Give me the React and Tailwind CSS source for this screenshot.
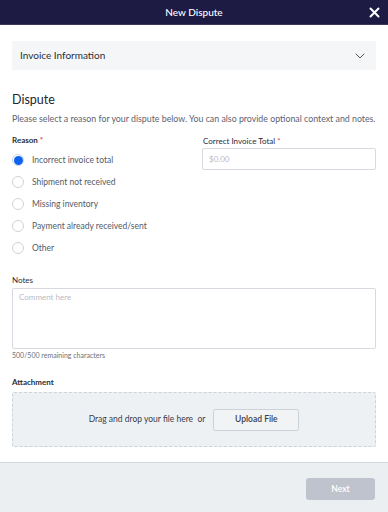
import React from "react";

const font = { fontFamily: "Lato, 'Noto Sans', sans-serif" };

function Radio({ checked, label }) {
  return (
    <div className="flex items-center h-[22px]">
      {checked ? (
        <span className="w-[12px] h-[12px] rounded-full border border-[#c9d4ea] flex items-center justify-center bg-white">
          <span className="w-[9px] h-[9px] rounded-full bg-[#0f62f0]" />
        </span>
      ) : (
        <span className="w-[12px] h-[12px] rounded-full border border-[#cfd3da] bg-white" />
      )}
      <span className="ml-[8px] text-[8.5px] text-[#555a66]">{label}</span>
    </div>
  );
}

export default function App() {
  return (
    <div className="w-[388px] h-[512px] flex flex-col bg-white" style={font}>
      <div className="h-[25px] bg-[#1d1a44] border-b border-[#3a3760] relative flex items-center justify-center shrink-0">
        <span className="text-white text-[10px] font-medium">New Dispute</span>
        <svg className="absolute right-[8px] top-[7px]" width="11" height="11" viewBox="0 0 11 11">
          <path d="M1.5 1.5L9.5 9.5M9.5 1.5L1.5 9.5" stroke="white" strokeWidth="2" strokeLinecap="round" />
        </svg>
      </div>
      <div className="flex-1 px-[12px]">
        <div className="mt-[16px] h-[29px] bg-[#f5f6f7] flex items-center justify-between pl-[8px] pr-[11px]">
          <span className="text-[10px] text-[#2a2d36]">Invoice Information</span>
          <svg width="10" height="6" viewBox="0 0 10 6">
            <path d="M0.7 0.7L5 5L9.3 0.7" stroke="#555" strokeWidth="1" fill="none" />
          </svg>
        </div>
        <div className="mt-[22px] text-[12.5px] text-[#23262f] leading-[16px]">Dispute</div>
        <div className="mt-[6px] text-[8.8px] text-[#5d6270] leading-[10px] whitespace-nowrap">
          Please select a reason for your dispute below. You can also provide optional context and notes.
        </div>
        <div className="grid grid-cols-[1fr_174px] gap-[11px] mt-[11px]">
          <div>
            <div className="text-[8px] font-bold text-[#2a2d36] leading-[10px]">
              Reason <span className="text-[#e0445a]">*</span>
            </div>
            <div className="mt-[4px]">
              <Radio checked label="Incorrect invoice total" />
              <Radio label="Shipment not received" />
              <Radio label="Missing inventory" />
              <Radio label="Payment already received/sent" />
              <Radio label="Other" />
            </div>
          </div>
          <div>
            <div className="text-[8px] text-[#2a2d36] leading-[10px] mt-[1px] ml-[1px]">
              Correct Invoice Total <span className="text-[#e0445a]">*</span>
            </div>
            <div className="mt-[2px] h-[22px] border border-[#d6d9df] rounded-[2px] flex items-center pl-[6px] text-[8px] text-[#b9bdc6]">
              $0.00
            </div>
          </div>
        </div>
        <div className="mt-[16px] text-[8px] text-[#2a2d36] leading-[10px]">Notes</div>
        <div className="mt-[3px] h-[61px] border border-[#d6d9df] rounded-[2px] px-[6px] pt-[3px] text-[8px] leading-[10px] text-[#b9bdc6]">
          Comment here
        </div>
        <div className="mt-[2px] text-[7px] text-[#6b707c] leading-[9px]">500/500 remaining characters</div>
        <div className="mt-[17px] text-[8px] font-bold text-[#2a2d36] leading-[10px]">Attachment</div>
        <div className="mt-[5px] h-[55px] bg-[#eef1f4] border border-dashed border-[#cdd2d9] rounded-[2px] flex items-center justify-center">
          <span className="text-[8.5px] text-[#3a3e48]">Drag and drop your file here&nbsp; or</span>
          <div className="ml-[8px] w-[86px] h-[22px] border border-[#cdd1d8] rounded-[2px] bg-[#f1f3f5] flex items-center justify-center">
            <span className="text-[8.5px] font-semibold text-[#3a3e48]">Upload File</span>
          </div>
        </div>
      </div>
      <div className="h-[50px] shrink-0 bg-[#ebeff2] border-t border-[#d5d9de] flex items-start justify-end pr-[13px] pt-[15px]">
        <div className="w-[69px] h-[22px] rounded-[3px] bg-[#bfc3ce] flex items-center justify-center">
          <span className="text-[8.5px] font-semibold text-white">Next</span>
        </div>
      </div>
    </div>
  );
}
